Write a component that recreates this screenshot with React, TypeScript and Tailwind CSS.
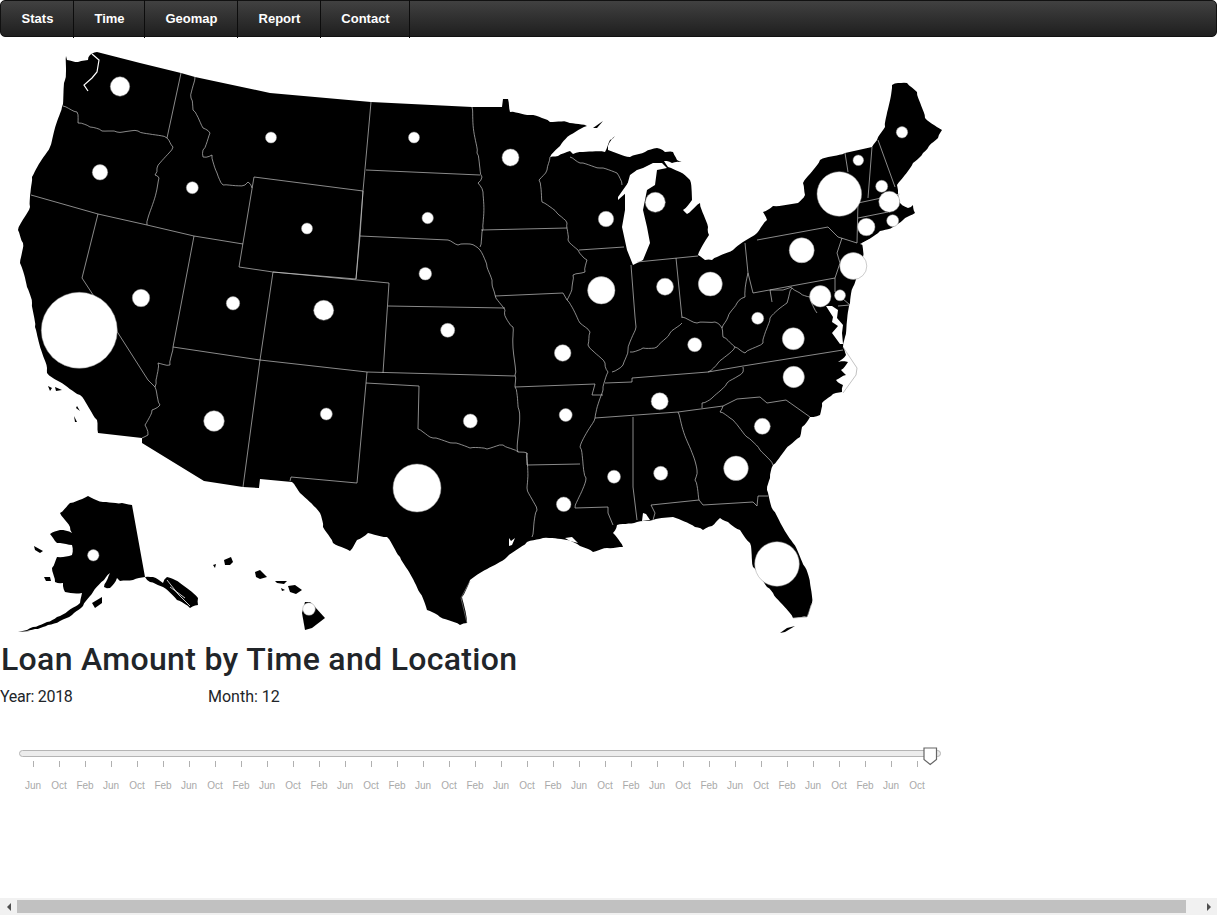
const tabs = ["Stats", "Time", "Geomap", "Report", "Contact"];
const tabWidths = ["w-[73px]", "w-[71px]", "w-[93px]", "w-[83px]", "w-[89px]"];

// breaks each segment into short steps, nudged to and fro, so shores and rivers don't look ruled
function wobble(d: string, amp = 0.9) {
  const pts = d.match(/-?\d+(\.\d+)?/g)!.map(Number);
  let out = `M${pts[0]} ${pts[1]}`;
  for (let i = 2; i < pts.length; i += 2) {
    const [x0, y0, x1, y1] = [pts[i - 2], pts[i - 1], pts[i], pts[i + 1]];
    const len = Math.hypot(x1 - x0, y1 - y0);
    const steps = Math.max(1, Math.round(len / 3));
    for (let s = 1; s <= steps; s++) {
      const t = s / steps;
      const n = s === steps ? 0 : Math.sin(s * 12.9 + i * 78.2) * amp;
      const x = x0 + (x1 - x0) * t - ((y1 - y0) / len) * n;
      const y = y0 + (y1 - y0) * t + ((x1 - x0) / len) * n;
      out += ` L${x.toFixed(1)} ${y.toFixed(1)}`;
    }
  }
  return out;
}

// joins straight and rough runs of an outline into one closed path
function outline(runs: [string, boolean][]) {
  return (
    runs
      .map(([d, rough], i) => {
        const path = rough ? wobble(d, 0.7) : d;
        return i === 0 ? path : path.replace(/^M/, "L");
      })
      .join(" ") + " Z"
  );
}

// main 48 states, pixel coordinates of the picture
const usaMain = outline([
  ["M97 52 L140 63 L181 73 L195 77 L270 93 L371 102 L472 107 L502 107 L503 99 L508 99", false],
  [
    "M508 99 L510 112 L530 115 L542 118 L550 122 L567 122 L587 126 L570 135 L560 146 L550 157 L558 156 L570 151 L573 154 L583 152 L605 152 L610 140 L615 136 L608 146 L608 150 L630 157 L645 152 L657 148 L665 152 L673 152 L677 160 L683 162 L672 163 L664 161 L668 167 L680 172 L690 180 L692 200 L683 210 L687 214 L700 203 L708 227 L709 235 L698 255 L705 260 L712 260 L733 250 L757 233 L767 220 L763 212 L773 206 L798 203 L805 195 L803 183 L820 160 L845 153",
    true,
  ],
  ["M845 153 L872 147", false],
  [
    "M872 147 L877 140 L885 127 L892 85 L898 83 L907 83 L917 92 L925 118 L942 130 L938 138 L929 146 L923 153 L913 163 L897 185 L898 193 L900 203 L908 208 L913 205 L915 213 L903 220 L893 227 L880 231 L862 243 L863 257 L860 270 L853 287 L850 303 L845 337 L843 347 L846 355 L838 362 L848 362 L841 370 L846 375 L836 380 L843 385 L842 392 L833 394 L822 403 L820 415 L810 417 L802 427 L800 437 L790 445 L773 465 L770 478 L767 490 L773 510 L793 543 L805 567 L810 583 L812 603 L807 617 L793 618 L773 593 L767 587 L753 567 L750 543 L740 530 L728 522 L720 518 L712 526 L703 530 L695 527 L673 517 L653 520 L637 522 L617 525 L613 533 L623 547 L607 548 L593 552 L580 546 L567 540 L543 538 L527 542 L507 557 L470 580 L462 597 L467 623 L460 625 L440 617 L427 610 L420 593 L400 557 L387 537 L368 533 L357 540 L350 551 L333 543 L323 527 L320 513 L300 493 L292 482",
    true,
  ],
  ["M292 482 L260 479 L259 488 L243 487 L204 481 L142 443 L142 438 L98 433", false],
  [
    "M98 433 L97 420 L80 395 L60 382 L47 373 L47 368 L35 327 L32 303 L27 287 L20 263 L23 243 L18 230 L30 207 L32 177 L50 147 L62 107 L65 80 L66 56 L67 60 L78 62 L88 60 L90 55 L97 52",
    true,
  ],
]);

// water cut out of the land
const water = [
  "M637 170 L630 175 L625 193 L625 210 L622 227 L627 250 L633 265 L643 260 L650 243 L647 227 L643 210 L647 190 L655 185 L657 170 L667 168 L662 163 L653 163 L643 168 Z",
  "M637 170 L630 180 L618 197 L618 200 L627 192 L633 183 Z",
  "M826 306 L833 317 L832 322 L838 326 L832 333 L840 344 L843 344 L842 333 L843 325 L837 318 L838 310 L832 306 Z",
  "M860 244 L893 228 L896 231 L866 246 Z",
  "M509 538 L511 541 L515 538 L512 545 L509 546 Z",
  "M565 538 L572 537 L578 543 L570 541 Z",
  "M643 513 L646 514 L650 520 L642 521 Z",
];

const puget = "M92 54 L99 60 L97 72 L92 78 L84 85 L88 91";

// straight-ish state borders
const borders = [
  "M181 73 L167 138",
  "M31 195 L98 214 L147 225 L194 236 L243 244",
  "M98 214 L82 278 L118 333 L148 380 L155 387",
  "M194 236 L173 347",
  "M254 177 L363 191 L356 279 L273 272 L239 267 Z",
  "M371 102 L363 191 L360 236 L356 279",
  "M366 170 L480 175",
  "M360 236 L448 240",
  "M481 230 L567 228",
  "M579 250 L624 247",
  "M495 296 L563 293 L567 300",
  "M388 306 L505 308",
  "M367 372 L515 376",
  "M273 272 L389 283 L383 373",
  "M273 272 L260 360",
  "M173 347 L260 360 L367 372",
  "M260 360 L243 487",
  "M367 372 L366 383 L357 483 L291 477 L290 481",
  "M366 383 L419 386 L418 429",
  "M527 465 L580 464",
  "M515 387 L595 384 L592 395 L603 395",
  "M605 383 L632 382 L632 378 L708 372 L743 366 L843 350",
  "M595 418 L678 412 L723 406",
  "M633 417 L633 487 L637 520",
  "M699 500 L651 505 L655 513 L653 520",
  "M699 500 L703 505 L753 502 L757 506 L758 496 L768 496",
  "M723 406 L737 399 L760 397 L767 403 L786 400 L810 417",
  "M575 508 L608 507 L608 513 L613 525",
  "M631 265 L635 317 L636 327",
  "M637 262 L698 256",
  "M676 258 L682 318",
  "M745 243 L748 273 L753 293 L835 278",
  "M757 240 L828 227 L838 237 L857 243",
  "M842 238 L837 253 L840 263 L835 278",
  "M772 302 L770 290 L783 290 L792 287",
  "M835 278 L835 292 L850 305 L838 306",
  "M845 153 L848 172",
  "M872 147 L868 198",
  "M878 140 L895 187",
  "M858 203 L900 194",
  "M858 218 L888 212",
  "M858 202 L857 243",
  "M527 453 L527 465",
];

// river and ridge borders, drawn with a small wobble
const rivers = [
  "M63 106 L77 112 L78 123 L90 127 L102 131 L117 132 L138 131 L167 138",
  "M167 138 L173 147 L157 168 L155 175 L159 178 L147 225",
  "M155 387 L160 405 L152 410 L145 425 L148 435 L142 438",
  "M173 347 L170 365 L158 363 L156 380 L155 387",
  "M195 77 L191 98 L193 110 L203 128 L210 133 L203 150 L203 157 L212 155 L217 173 L223 185 L245 185 L248 182 L252 188",
  "M448 240 L458 245 L470 244 L480 250 L487 267 L492 283 L495 295 L505 310 L506 318 L513 327 L515 375 L515 387 L519 410 L518 452 L527 453 L527 488 L537 510 L532 537",
  "M472 107 L477 153 L482 177 L478 183 L483 192 L483 229 L480 247",
  "M550 157 L547 170 L539 180 L542 202 L557 213 L567 223 L568 240 L578 250 L587 260 L585 272 L573 275 L572 287 L567 300 L580 323 L590 332 L588 345 L605 363 L608 372 L603 390 L595 418 L580 447 L586 478 L575 508",
  "M570 157 L580 163 L600 168 L617 173 L622 185",
  "M418 429 L433 438 L453 443 L470 448 L487 449 L503 445 L518 452",
  "M743 367 L743 372 L727 383 L712 398 L702 403 L702 408",
  "M678 412 L697 470 L695 480 L699 500",
  "M723 406 L720 412 L730 418 L747 437 L760 450 L773 465",
  "M636 327 L628 350 L623 365 L612 372",
  "M682 323 L670 333 L657 347 L643 348 L630 352",
  "M682 317 L697 323 L715 322 L722 328",
  "M722 328 L728 317 L737 303 L745 297 L748 273",
  "M722 328 L723 337 L735 347 L718 363 L708 372",
  "M735 347 L745 353 L763 343 L770 318 L787 303 L792 288 L800 293 L810 297 L817 313",
];

// thin shore lines that show on white
const shores = [
  "M843 347 L857 368 L856 375 L843 393",
  "M467 623 L461 598 L470 581",
  "M793 618 L807 617 L812 603",
];

const alaska = [
  outline([
    [
      "M132 505 L122 503 L103 502 L88 496 L70 503 L60 513 L70 527 L72 533 L60 530 L50 534 L57 543 L72 545 L72 555 L57 557 L52 568 L55 582 L63 583 L65 592 L82 593 L80 603 L68 611 L57 617 L47 622 L33 627 L27 630 L35 629 L48 625 L60 621 L72 615 L83 606 L93 592 L104 580 L110 573 L106 582 L104 587 L110 588 L117 578 L120 581 L133 580 L145 577",
      true,
    ],
    ["M145 577 L132 505", false],
  ]),
  wobble("M145 577 L153 577 L163 583 L167 577 L180 583 L198 598 L198 605 L190 608 L177 600 L163 587 L150 582 L145 577 Z".replace(" Z", ""), 0.7),
  "M92 603 L102 597 L102 603 L95 608 Z",
  "M34 546 L43 551 L40 553 L35 550 Z",
  "M44 577 L50 577 L51 581 L46 581 Z",
  "M27 630 L18 632 L30 631 Z",
];

const alaskaCracks = ["M167 580 L178 594 L190 606", "M170 587 L185 598", "M165 590 L178 603"];

const hawaii = [
  "M224 560 L231 557 L233 562 L230 565 L225 565 Z",
  "M213 565 L216 564 L215 568 Z",
  "M255 572 L260 570 L267 577 L260 579 L256 577 Z",
  "M275 581 L287 581 L284 584 L277 583 Z",
  "M288 586 L295 585 L302 590 L296 594 L290 592 Z",
  "M281 588 L285 590 L282 591 Z",
  "M305 602 L302 613 L305 630 L312 628 L325 618 L315 607 L310 602 Z",
];

const islands = [
  "M48 386 L52 388 L50 391 Z",
  "M55 387 L62 390 L56 391 Z",
  "M77 406 L80 411 L76 408 Z",
  "M74 416 L77 422 L75 422 Z",
  "M787 628 L795 626 L785 632 L780 633 Z",
  "M593 128 L603 121 L597 128 Z",
];

const bubbles: [number, number, number][] = [
  [120, 86.5, 9.7], [100, 172.3, 7.7], [192.3, 187.7, 6], [271, 137.5, 5.5], [414, 137.5, 5.5],
  [427.7, 218, 5.7], [307, 228.5, 5.5], [425.3, 273.7, 6.3], [323.7, 310.3, 10], [447.7, 330.3, 7],
  [233, 303.3, 6.7], [141, 298, 8.7], [79.3, 330.3, 38], [214, 421, 10.3], [326.3, 414, 6],
  [417, 488, 24], [470.3, 421, 7], [93.3, 555.3, 5.7], [309, 609, 6.3], [510.5, 157.5, 8.5],
  [606, 219, 7.7], [601.3, 290.3, 13.7], [655.3, 202.3, 10], [665, 286.7, 8.5], [710.3, 284, 12],
  [694.7, 344.7, 7], [757.7, 318.3, 6], [793.3, 338.7, 11], [793.7, 377, 10.7], [801.7, 250.3, 12.5],
  [839.3, 194, 22.3], [858.3, 160.3, 5.3], [881.7, 186.3, 6], [902, 132.3, 5.7], [889.3, 201.7, 10.5],
  [892.7, 220.7, 6], [866.3, 227, 8.7], [853.3, 266, 13.5], [820.3, 296.3, 10.7], [840, 295.3, 5.5],
  [562.7, 353, 8.3], [565.7, 415, 6.5], [659.7, 401.3, 8.5], [614, 476.7, 6.5], [660.7, 473.3, 7],
  [736, 468.3, 12.3], [762.3, 426.3, 8], [563.7, 504.3, 7.3], [777, 564, 22.3],
];

const months = ["Jun", "Oct", "Feb"];
const ticks = Array.from({ length: 35 }, (_, i) => months[i % 3]);

function UsaMap() {
  return (
    <svg width="945" height="597" viewBox="0 37 945 597" className="block">
      <path d={usaMain} fill="#000" />
      {alaska.concat(hawaii, islands).map((d) => (
        <path key={d} d={d} fill="#000" />
      ))}
      {water.map((d) => (
        <path key={d} d={d} fill="#fff" />
      ))}
      <path d={puget} fill="none" stroke="#fff" strokeWidth="1.2" />
      {alaskaCracks.map((d) => (
        <path key={d} d={d} fill="none" stroke="#fff" strokeWidth="0.8" />
      ))}
      {borders.map((d) => (
        <path key={d} d={d} fill="none" stroke="#c4c4c4" strokeWidth="0.7" />
      ))}
      {rivers.map((d) => (
        <path key={d} d={wobble(d)} fill="none" stroke="#c4c4c4" strokeWidth="0.7" />
      ))}
      {shores.map((d) => (
        <path key={d} d={d} fill="none" stroke="#999" strokeWidth="0.6" />
      ))}
      {bubbles.map(([cx, cy, r]) => (
        <circle key={`${cx}-${cy}`} cx={cx} cy={cy} r={r} fill="#fff" stroke="#999" strokeWidth="0.5" />
      ))}
    </svg>
  );
}

function TimeSlider() {
  return (
    <div className="w-[945px] pt-[41px] font-['Liberation_Sans',Arial,sans-serif]">
      <div className="relative ml-[19px] h-[7px] w-[922px] rounded-full border border-[#b4b4b4] bg-[#ececec]">
        <svg width="15" height="19" viewBox="0 0 15 19" className="absolute left-[903px] top-[-4px]">
          <path d="M1 1 H13.5 V12.5 L7.2 17.5 L1 12.5 Z" fill="#fff" stroke="#666" strokeWidth="1.2" />
        </svg>
      </div>
      <div className="ml-[20px] mt-[4px] flex">
        {ticks.map((label, i) => (
          <div key={i} className="flex w-[26px] flex-col items-center">
            <div className="h-[6px] w-px bg-[#b0b0b0]" />
            <span className="mt-[13px] text-[10px] leading-[11px] text-[#a9a9a9]">{label}</span>
          </div>
        ))}
      </div>
    </div>
  );
}

export default function App() {
  return (
    <div className="flex h-[915px] flex-col overflow-hidden bg-white">
      <div className="flex-1">
        <nav className="flex h-[37px] rounded-[5px] border border-[#111] bg-gradient-to-b from-[#414141] to-[#1f1f1f] font-['Liberation_Sans',Arial,sans-serif] text-[13px] font-bold text-white">
          {tabs.map((tab, i) => (
            <div key={tab} className={`relative flex items-center justify-center pt-px ${tabWidths[i]}`}>
              {tab}
              <span className="absolute bottom-[-2px] right-0 top-[-1px] w-px bg-[#0c0c0c]" />
            </div>
          ))}
        </nav>
        <UsaMap />
        <div className="font-['Roboto','Open_Sans',sans-serif] text-[#212529]">
          <h2 className="mt-[6px] pl-px text-[32px] font-medium leading-[38px] tracking-[0.32px]">Loan Amount by Time and Location</h2>
          <div className="mt-[7px] flex text-base leading-6">
            <div className="w-[208px] tracking-[-0.3px]">Year: 2018</div>
            <div>Month: 12</div>
          </div>
        </div>
        <TimeSlider />
      </div>
      <div className="flex h-[17px] items-center bg-[#f1f1f1]">
        <div className="flex w-[17px] justify-center">
          <div className="h-0 w-0 border-y-[4px] border-r-[4px] border-y-transparent border-r-[#505050]" />
        </div>
        <div className="h-[13px] flex-1 bg-[#c1c1c1]" />
        <div className="flex w-[31px] justify-end pr-[6px]">
          <div className="h-0 w-0 border-y-[4px] border-l-[4px] border-y-transparent border-l-[#505050]" />
        </div>
      </div>
    </div>
  );
}
